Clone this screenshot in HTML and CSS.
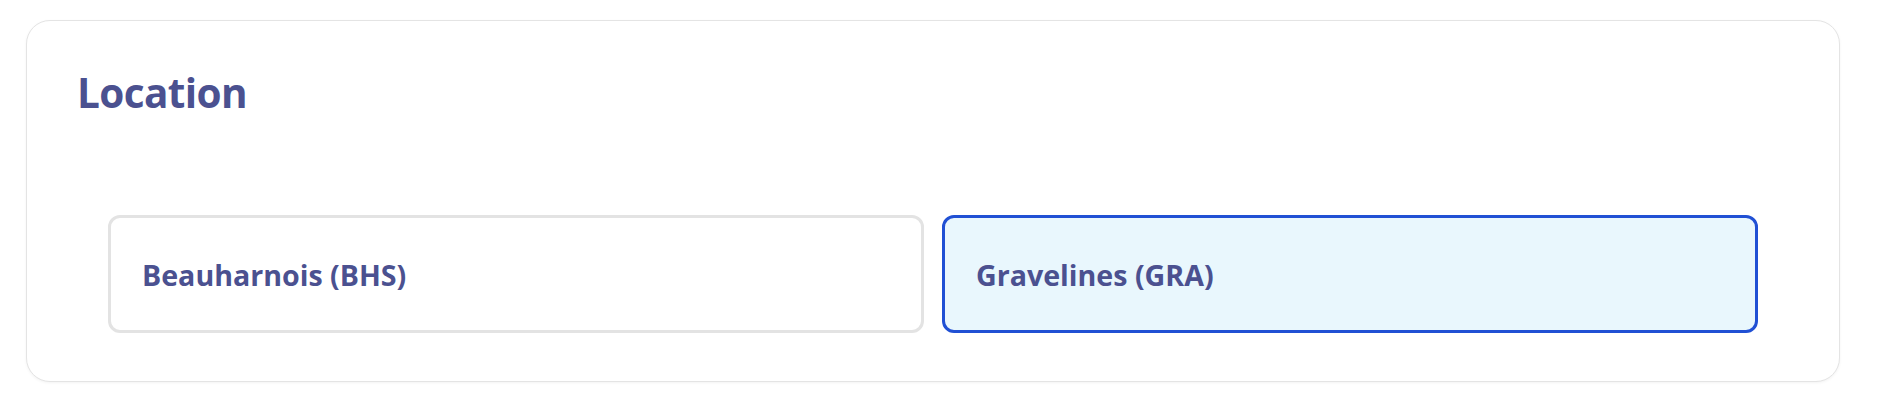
FILE: index.html
```html
<!DOCTYPE html>
<html lang="en">
<head>
<meta charset="utf-8">
<title>Location</title>
<link rel="stylesheet" href="styles.css">
</head>
<body>
<div class="page">
  <section class="card">
    <h2 class="card-title">Location</h2>
    <div class="options">
      <div class="option">Beauharnois (BHS)</div>
      <div class="option option-selected">Gravelines (GRA)</div>
    </div>
  </section>
</div>
</body>
</html>
```
FILE: styles.css
```css
html, body {
  margin: 0;
  padding: 0;
  background: #ffffff;
}

body {
  font-family: "Open Sans", "Noto Sans", sans-serif;
  color: #4b5190;
}

.page {
  padding: 20px 44px 23px 26px;
}

.card {
  border: 1px solid #e4e4e4;
  border-radius: 24px;
  box-shadow: 0 1px 3px rgba(0, 0, 0, 0.05);
  padding: 52px 50px 48px 50px;
  background: #ffffff;
}

.card-title {
  margin: 0;
  font-size: 40.5px;
  line-height: 40px;
  font-weight: 700;
  letter-spacing: -0.6px;
  color: #4b5190;
}

.options {
  margin: 102px 31px 0 31px;
  display: grid;
  grid-template-columns: 1fr 1fr;
  gap: 18px;
}

.option {
  height: 118px;
  box-sizing: border-box;
  border: 3px solid #e3e3e3;
  border-radius: 12px;
  padding: 0 31px;
  display: flex;
  align-items: center;
  font-size: 28.6px;
  font-weight: 700;
  color: #4b5190;
  background: #ffffff;
}

.option-selected {
  border-color: #2050d4;
  background: #e9f7fd;
}
```
